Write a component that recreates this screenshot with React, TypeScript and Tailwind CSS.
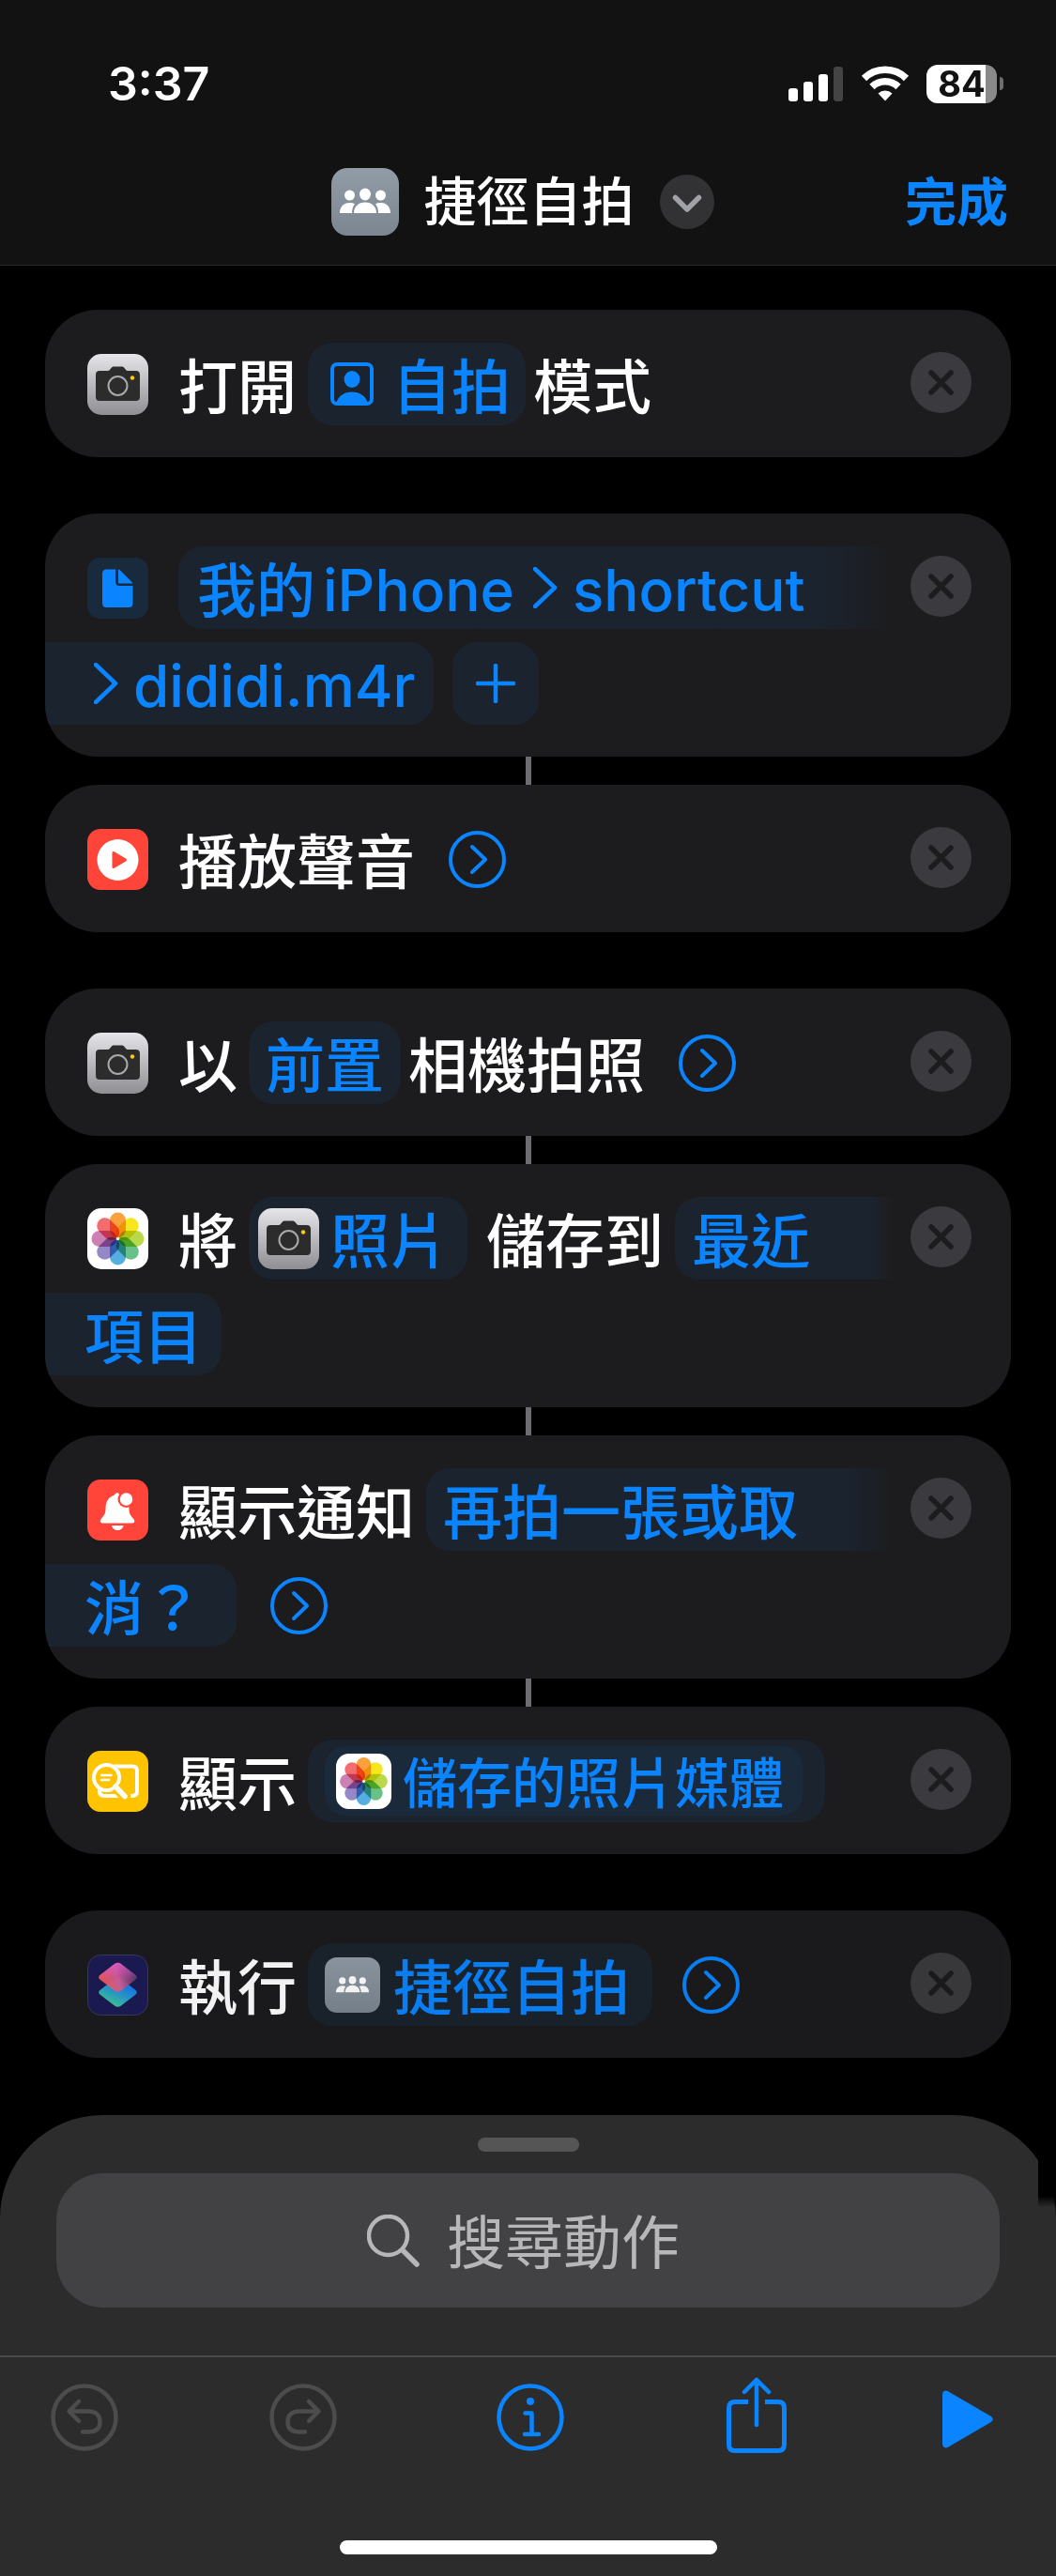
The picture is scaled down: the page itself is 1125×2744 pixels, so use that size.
import React from "react";

type IconProps = { className?: string };

function PeopleGlyph({ className }: IconProps) {
  return (
    <svg viewBox="0 0 72 72" className={className} fill="currentColor" aria-hidden="true">
      <circle cx="19.5" cy="29" r="5.5" />
      <circle cx="52.5" cy="29" r="5.5" />
      <ellipse cx="36" cy="28" rx="6" ry="6.5" />
      <path d="M24 48c0-7 5-11.500 12-11.500S48 41 48 48z" />
      <path d="M9 48c0-6.500 4-11 10.500-11 2 0 4 .4 5.500 1.300C23 40.500 22 44 22 48z" />
      <path d="M63 48c0-6.500-4-11-10.500-11-2 0-4 .4-5.500 1.300 2 2.200 3 5.700 3 9.700z" />
    </svg>
  );
}

function ShortcutTile({ className }: IconProps) {
  return (
    <span className={`flex shrink-0 bg-linear-to-b from-[#929ca7] to-[#7b8691] text-white ${className ?? ""}`}>
      <PeopleGlyph className="size-full" />
    </span>
  );
}

function CameraIcon({ className }: IconProps) {
  return (
    <svg viewBox="0 0 65 65" className={`shrink-0 ${className ?? ""}`} aria-hidden="true">
      <defs>
        <linearGradient id="camera-bg" x1="0" y1="0" x2="0" y2="1">
          <stop offset="0" stopColor="#e6e5ea" />
          <stop offset="1" stopColor="#8f8e93" />
        </linearGradient>
      </defs>
      <rect width="65" height="65" rx="15" fill="url(#camera-bg)" />
      <path
        d="M13 18h9c1.500 0 2.300-1.500 3.500-3 .8-1 1.500-1.500 3-1.500h8c1.500 0 2.200.5 3 1.500 1.200 1.500 2 3 3.500 3h9c2.500 0 4 1.500 4 4v24c0 2.500-1.500 4-4 4H13c-2.500 0-4-1.500-4-4V22c0-2.500 1.500-4 4-4z"
        fill="#2c2c2c"
      />
      <circle cx="32.500" cy="34" r="10" fill="none" stroke="#a9a8ad" strokeWidth="2" />
      <circle cx="48" cy="25.500" r="2.200" fill="#ffcc00" />
    </svg>
  );
}

const petals = ["#f9a13c", "#f7e61e", "#b9d94a", "#69c088", "#55aee2", "#9488c6", "#cd80b4", "#f36c70"];

function PhotosIcon({ className }: IconProps) {
  return (
    <svg viewBox="0 0 65 65" className={`shrink-0 ${className ?? ""}`} aria-hidden="true">
      <rect width="65" height="65" rx="15" fill="#fff" />
      <g className="isolate">
        {petals.map((color, i) => (
          <rect
            key={color}
            x="24"
            y="4.500"
            width="17"
            height="27"
            rx="8.500"
            fill={color}
            transform={`rotate(${i * 45} 32.500 32.500)`}
            className="mix-blend-multiply"
          />
        ))}
      </g>
      <circle cx="32.500" cy="32.500" r="1.500" fill="#fff" />
    </svg>
  );
}

function FileIcon({ className }: IconProps) {
  return (
    <svg viewBox="0 0 65 65" className={`shrink-0 ${className ?? ""}`} aria-hidden="true">
      <rect width="65" height="65" rx="14" fill="#1a2a3d" />
      <path
        d="M20.500 12.500H30V25.500c0 3 1.500 4.500 4.500 4.500H48.500V48.500c0 3-1.500 4.500-4.500 4.500H20.500c-3 0-4.500-1.500-4.500-4.500V17c0-3 1.500-4.500 4.500-4.500z"
        fill="#0a84ff"
      />
      <path d="M33 12.500c.8 0 1.600.5 2.500 1.400L47 25.500c.8.800 1.200 1.500 1.200 2H34.500c-1 0-1.500-.5-1.500-1.500z" fill="#0a84ff" />
    </svg>
  );
}

function PlaySoundIcon({ className }: IconProps) {
  return (
    <svg viewBox="0 0 65 65" className={`shrink-0 ${className ?? ""}`} aria-hidden="true">
      <rect width="65" height="65" rx="14" fill="#ff453a" />
      <circle cx="32.500" cy="33" r="22" fill="#fff" />
      <path d="M26.500 25.500c0-1.500 1-2 2.200-1.300L41 31.500c1.300.8 1.300 2.200 0 3L28.700 41.800c-1.200.7-2.200.2-2.200-1.300z" fill="#ff453a" />
    </svg>
  );
}

function BellIcon({ className }: IconProps) {
  return (
    <svg viewBox="0 0 65 65" className={`shrink-0 ${className ?? ""}`} aria-hidden="true">
      <rect width="65" height="65" rx="14" fill="#ff453a" />
      <path
        d="M32.500 14c-1.500 0-3 1-3.600 2.500C22.500 18.500 19.500 24 19.500 31c0 4.500-1 6.500-4 10-1.500 1.700-1.800 2.600-1.800 3.200 0 1.300 1 2.300 2.600 2.300h31.400c1.600 0 2.600-1 2.600-2.300 0-.6-.3-1.500-1.800-3.200-3-3.500-4-5.500-4-10l-.3-3z"
        fill="#fff"
      />
      <path d="M26 49h12.500c-.5 3-3 5-6.200 5s-5.800-2-6.300-5z" fill="#fff" />
      <circle cx="41.500" cy="21" r="9" fill="#ff453a" />
      <circle cx="41.500" cy="21" r="6.700" fill="#fff" />
    </svg>
  );
}

function QuickLookIcon({ className }: IconProps) {
  return (
    <svg viewBox="0 0 65 65" className={`shrink-0 ${className ?? ""}`} fill="none" aria-hidden="true">
      <rect width="65" height="65" rx="14" fill="#ffc300" />
      <path d="M28 16.500H48c3.500 0 5 1.500 5 5V43c0 3.500-1.500 5-5 5H46" stroke="#fff" strokeWidth="4" />
      <path d="M13 40v3c0 3.500 1.500 5 5 5h15" stroke="#fff" strokeWidth="4" />
      <circle cx="20.500" cy="28.500" r="15.500" fill="#ffc300" />
      <circle cx="20.500" cy="28.500" r="13.500" stroke="#fff" strokeWidth="4" />
      <path d="M30.500 39L39.500 48" stroke="#ffc300" strokeWidth="11" />
      <path d="M30 38L40 48.500" stroke="#fff" strokeWidth="5.500" strokeLinecap="round" />
      <path d="M15 26H25.500M15 31H23" stroke="#fff" strokeWidth="2.500" strokeLinecap="round" />
    </svg>
  );
}

function ShortcutsAppIcon({ className }: IconProps) {
  return (
    <svg viewBox="0 0 65 65" className={`shrink-0 ${className ?? ""}`} aria-hidden="true">
      <defs>
        <linearGradient id="layer-top" x1="0.100" y1="0.700" x2="0.950" y2="0.500">
          <stop offset="0" stopColor="#ff5f57" />
          <stop offset="0.500" stopColor="#dd5f98" />
          <stop offset="1" stopColor="#5d3a72" />
        </linearGradient>
        <linearGradient id="layer-shine" x1="0.500" y1="0" x2="0.500" y2="0.600">
          <stop offset="0" stopColor="#f060d8" />
          <stop offset="1" stopColor="#f060d8" stopOpacity="0" />
        </linearGradient>
        <linearGradient id="layer-bottom" x1="0.300" y1="1" x2="0.800" y2="0.200">
          <stop offset="0" stopColor="#45d18b" />
          <stop offset="0.500" stopColor="#2a9fd0" />
          <stop offset="1" stopColor="#1673f5" />
        </linearGradient>
      </defs>
      <rect x="0.500" y="0.500" width="64" height="64" rx="14" fill="#1c1c55" stroke="#3a3a5c" />
      <path
        d="M29 26 14 37.500c-2.400 1.700-2.400 3.800 0 5.500l15 11.500c2.500 1.800 4.500 1.800 7 0l15-11.500c2.400-1.700 2.400-3.800 0-5.500L36 26c-2.500-1.800-4.500-1.800-7 0z"
        fill="url(#layer-bottom)"
      />
      <path
        d="M29 10 14 21.500c-2.400 1.700-2.400 3.800 0 5.500l15 11.500c2.500 1.800 4.500 1.800 7 0l15-11.500c2.400-1.700 2.400-3.800 0-5.500L36 10c-2.500-1.800-4.500-1.800-7 0z"
        fill="url(#layer-top)"
        opacity="0.920"
      />
      <path
        d="M29 10 14 21.500c-2.400 1.700-2.400 3.800 0 5.500l15 11.500c2.500 1.800 4.500 1.800 7 0l15-11.500c2.400-1.700 2.400-3.800 0-5.500L36 10c-2.500-1.800-4.500-1.800-7 0z"
        fill="url(#layer-shine)"
        opacity="0.800"
      />
    </svg>
  );
}

function PortraitIcon() {
  return (
    <svg viewBox="0 0 46 46" className="size-[46px] shrink-0" fill="none" aria-hidden="true">
      <defs>
        <clipPath id="portrait-frame">
          <rect x="3" y="3" width="40" height="40" rx="3" />
        </clipPath>
      </defs>
      <rect x="2" y="2" width="42" height="42" rx="5" stroke="#0a84ff" strokeWidth="4" />
      <g fill="#0a84ff" clipPath="url(#portrait-frame)">
        <ellipse cx="23" cy="18" rx="8.500" ry="9" />
        <path d="M6 45c1-8 8-13.500 17-13.500S39 37 40 45z" />
      </g>
    </svg>
  );
}

function ChevronRight() {
  return (
    <svg viewBox="0 0 26 44" className="h-[44px] w-[26px] shrink-0" fill="none" aria-hidden="true">
      <path d="M2 2 23 22 2 42" stroke="#0a84ff" strokeWidth="4.500" strokeLinecap="round" strokeLinejoin="round" />
    </svg>
  );
}

function ExpandButton({ className }: IconProps) {
  return (
    <button type="button" aria-label="顯示更多" className={`shrink-0 ${className ?? ""}`}>
      <svg viewBox="0 0 61 61" className="size-[61px]" fill="none" stroke="#0a84ff" strokeLinecap="round" strokeLinejoin="round">
        <circle cx="30.500" cy="30.500" r="28.500" strokeWidth="4" />
        <path d="M25 17 39 30.500 25 44" strokeWidth="4" />
      </svg>
    </button>
  );
}

function RemoveButton() {
  return (
    <button type="button" aria-label="移除動作" className="absolute top-[45px] right-[42px]">
      <svg viewBox="0 0 65 65" className="size-[65px]">
        <circle cx="32.500" cy="32.500" r="32.500" fill="#3b3b3f" />
        <path d="M22 22 43 43M43 22 22 43" stroke="#1c1c1e" strokeWidth="5.500" strokeLinecap="round" />
      </svg>
    </button>
  );
}

function Card({ children, className }: { children: React.ReactNode; className?: string }) {
  return (
    <article className={`relative overflow-hidden rounded-[56px] bg-[#1c1c1e] pt-[35px] pb-[34px] ${className ?? ""}`}>
      {children}
      <RemoveButton />
    </article>
  );
}

function Line({ children, className }: { children: React.ReactNode; className?: string }) {
  return <div className={`flex h-[88px] items-center whitespace-nowrap ${className ?? ""}`}>{children}</div>;
}

function Text({ children, className }: { children: React.ReactNode; className?: string }) {
  return <span className={`pt-1.5 ${className ?? ""}`}>{children}</span>;
}

function Pill({ children, className }: { children: React.ReactNode; className?: string }) {
  return (
    <button type="button" className={`flex h-[88px] shrink-0 items-center bg-[#1b232e] text-[#0a84ff] ${className ?? ""}`}>
      {children}
    </button>
  );
}

function Connector() {
  return <div className="mx-auto h-[30px] w-[6px] bg-[#6c6c72]" />;
}

const actionIcon = "ml-[45px] mr-8 size-[65px]";
const fadingPill = "grow rounded-l-[26px] bg-transparent bg-linear-to-r from-[#1b232e] from-90% to-[#1c1c1e] mr-[126px]";

export default function App() {
  return (
    <div className="flex min-h-screen flex-col bg-black font-['Inter','Noto_Sans_CJK_TC',sans-serif] font-medium text-white">
      <header className="border-b border-[#2a2a2b] bg-[#121212]">
        <div className="flex h-[176px] items-center justify-between pt-[2px] pr-[56px] pl-[115px]">
          <span className="text-[50px] leading-none font-semibold">3:37</span>
          <div className="flex items-center gap-[18px]">
            <svg viewBox="0 0 59 37" className="h-[37px] w-[59px]" fill="#fff" aria-label="訊號">
              <rect y="23" width="10" height="14" rx="3" />
              <rect x="16" y="16" width="10" height="21" rx="3" />
              <rect x="32" y="8" width="10" height="29" rx="3" />
              <rect x="48" width="10" height="37" rx="3" fill="#444" />
            </svg>
            <svg viewBox="0 0 52 38" className="h-[38px] w-[52px]" aria-label="Wi-Fi">
              <g fill="none" stroke="#fff" strokeWidth="7.500">
                <path d="M3.500 13.500a32 32 0 0 1 45 0" />
                <path d="M12 22.500a20 20 0 0 1 28 0" />
              </g>
              <path d="M26 37.500 18.500 29.500a11 11 0 0 1 15 0z" fill="#fff" />
            </svg>
            <div className="flex items-center gap-[3px]">
              <div className="flex h-[41px] w-[75px] items-center justify-center rounded-[12px] bg-linear-to-r from-white from-84% to-[#8a8a8a] to-84%">
                <span className="text-[38px] leading-none font-bold text-[#121212]">84</span>
              </div>
              <div className="h-[14px] w-[4px] rounded-r-full bg-[#6e6e6e]" />
            </div>
          </div>
        </div>
        <div className="grid h-[106px] grid-cols-[1fr_auto_1fr] items-center pb-[28px]">
          <span />
          <div className="flex items-center pr-3">
            <ShortcutTile className="size-[72px] rounded-[17px]" />
            <h1 className="ml-[27px] text-[56px] leading-[76px] font-medium">捷徑自拍</h1>
            <button type="button" aria-label="選單" className="ml-[27px]">
              <svg viewBox="0 0 58 58" className="size-[58px]" fill="none">
                <circle cx="29" cy="29" r="29" fill="#323234" />
                <path d="M16.500 24.500 29 37 41.500 24.500" stroke="#a1a1a8" strokeWidth="5.500" strokeLinecap="round" strokeLinejoin="round" />
              </svg>
            </button>
          </div>
          <button type="button" className="justify-self-end pr-[51px] text-[55px] leading-[76px] font-semibold text-[#0a84ff]">
            完成
          </button>
        </div>
      </header>

      <main className="grow px-12 pt-[47px] text-[63px] leading-[80px]">
        <Card>
          <Line>
            <CameraIcon className={actionIcon} />
            <Text>打開</Text>
            <Pill className="mr-2 ml-3 rounded-[26px] pr-4 pl-6">
              <PortraitIcon />
              <Text className="ml-5">自拍</Text>
            </Pill>
            <Text>模式</Text>
          </Line>
        </Card>

        <Card className="mt-[60px]">
          <Line>
            <FileIcon className={actionIcon} />
            <Pill className={`${fadingPill} pl-5`}>
              <Text>我的</Text>
              <Text className="ml-2 text-[62px]">iPhone</Text>
              <span className="mr-4 ml-5">
                <ChevronRight />
              </span>
              <Text className="text-[62px]">shortcut</Text>
            </Pill>
          </Line>
          <Line className="mt-[14px]">
            <Pill className="rounded-r-[26px] pr-5 pl-[52px]">
              <ChevronRight />
              <Text className="ml-4 text-[62px]">dididi.m4r</Text>
            </Pill>
            <Pill className="ml-5 w-[92px] justify-center rounded-[26px]">
              <svg viewBox="0 0 42 42" className="size-[42px]" aria-label="加入">
                <path d="M21 2V40M2 21H40" stroke="#0a84ff" strokeWidth="4.500" strokeLinecap="round" />
              </svg>
            </Pill>
          </Line>
        </Card>
        <Connector />
        <Card>
          <Line>
            <PlaySoundIcon className={actionIcon} />
            <Text>播放聲音</Text>
            <ExpandButton className="ml-9" />
          </Line>
        </Card>

        <Card className="mt-[60px]">
          <Line>
            <CameraIcon className={actionIcon} />
            <Text>以</Text>
            <Pill className="mr-2 ml-3 rounded-[26px] px-[18px]">
              <Text>前置</Text>
            </Pill>
            <Text>相機拍照</Text>
            <ExpandButton className="ml-9" />
          </Line>
        </Card>
        <Connector />
        <Card>
          <Line>
            <PhotosIcon className={actionIcon} />
            <Text>將</Text>
            <Pill className="mr-5 ml-3 rounded-[26px] pr-5 pl-2.5">
              <CameraIcon className="size-[65px]" />
              <Text className="ml-3">照片</Text>
            </Pill>
            <Text>儲存到</Text>
            <Pill className={`${fadingPill} ml-3 pl-[18px]`}>
              <Text>最近</Text>
            </Pill>
          </Line>
          <Line className="mt-[14px]">
            <Pill className="rounded-r-[26px] pr-5 pl-[42px]">
              <Text>項目</Text>
            </Pill>
          </Line>
        </Card>
        <Connector />
        <Card>
          <Line>
            <BellIcon className={actionIcon} />
            <Text>顯示通知</Text>
            <Pill className={`${fadingPill} ml-3 pl-[18px]`}>
              <Text>再拍一張或取</Text>
            </Pill>
          </Line>
          <Line className="mt-[14px]">
            <Pill className="rounded-r-[26px] pr-9 pl-[42px]">
              <Text>消？</Text>
            </Pill>
            <ExpandButton className="ml-9" />
          </Line>
        </Card>
        <Connector />
        <Card>
          <Line>
            <QuickLookIcon className={actionIcon} />
            <Text>顯示</Text>
            <Pill className="ml-3 rounded-[26px] pr-6 pl-[18px]">
              <span className="flex h-[74px] items-center rounded-[22px] bg-[#1a2a3a] pr-5 pl-3">
                <PhotosIcon className="size-[59px]" />
                <Text className="ml-3 text-[58px]">儲存的照片媒體</Text>
              </span>
            </Pill>
          </Line>
        </Card>

        <Card className="mt-[60px] opacity-95">
          <Line>
            <ShortcutsAppIcon className={actionIcon} />
            <Text>執行</Text>
            <Pill className="ml-3 rounded-[26px] pr-6 pl-[18px]">
              <ShortcutTile className="size-[59px] rounded-[13px] p-1.5" />
              <Text className="ml-3.5">捷徑自拍</Text>
            </Pill>
            <ExpandButton className="ml-8" />
          </Line>
        </Card>
      </main>

      <footer className="relative mt-[61px] rounded-t-[110px] bg-[#2c2c2c]">
        <div className="absolute top-0 right-0 h-[98px] w-[19px] bg-linear-to-b from-black from-88% to-transparent" />
        <div className="px-[60px] pt-6 pb-[51px]">
          <div className="mx-auto h-[15px] w-[108px] rounded-full bg-[#555]" />
          <label className="mt-[23px] flex h-[143px] items-center justify-center rounded-[50px] bg-[#424244]">
            <svg viewBox="0 0 56 56" className="size-[56px]" fill="none" stroke="#b7b7ba" strokeLinecap="round" aria-hidden="true">
              <circle cx="22.500" cy="22.500" r="20.500" strokeWidth="4.500" />
              <path d="M38 38 53 53" strokeWidth="5.500" />
            </svg>
            <input
              type="text"
              aria-label="搜尋動作"
              placeholder="搜尋動作"
              className="ml-[29px] h-[94px] w-[258px] bg-transparent pt-1.5 text-[62px] leading-[88px] font-normal text-white outline-none placeholder:text-[#b7b7ba]"
            />
          </label>
        </div>
        <nav className="border-t-2 border-[#4a4a4b] pt-5 pb-6">
          <div className="flex justify-between pr-[34px] pl-[38px]">
            <button type="button" aria-label="還原" disabled className="flex size-[88px] items-center justify-center pl-4 text-[#4c4c4d]">
              <svg viewBox="0 0 72 72" className="size-[72px]" fill="none" stroke="currentColor" strokeWidth="4.500" strokeLinecap="round" strokeLinejoin="round">
                <circle cx="36" cy="36" r="33.500" />
                <path d="M30 19 19.500 29.500 30 40M20.500 29.500H40c8 0 12.500 4 12.500 11.500S48 51.500 40 51.500H34" />
              </svg>
            </button>
            <button type="button" aria-label="重做" disabled className="flex size-[88px] items-center justify-center text-[#4c4c4d]">
              <svg viewBox="0 0 72 72" className="size-[72px]" fill="none" stroke="currentColor" strokeWidth="4.500" strokeLinecap="round" strokeLinejoin="round">
                <circle cx="36" cy="36" r="33.500" />
                <path d="M42 19 52.500 29.500 42 40M51.500 29.500H32c-8 0-12.500 4-12.500 11.500S24 51.500 32 51.500h6" />
              </svg>
            </button>
            <button type="button" aria-label="資訊" className="flex size-[88px] items-center justify-center text-[#0a84ff]">
              <svg viewBox="0 0 72 72" className="size-[72px]" fill="none" stroke="currentColor" strokeWidth="4.500" strokeLinecap="round" strokeLinejoin="round">
                <circle cx="36" cy="36" r="33.500" />
                <circle cx="36" cy="19" r="4" fill="currentColor" stroke="none" />
                <path d="M30.500 31.500H37.500V54M30 54H45" />
              </svg>
            </button>
            <button type="button" aria-label="分享" className="flex size-[88px] items-center justify-center pb-1 text-[#0a84ff]">
              <svg viewBox="0 0 64 82" className="h-[82px] w-[64px]" fill="none" stroke="currentColor" strokeWidth="5" strokeLinecap="round" strokeLinejoin="round">
                <path d="M23 26.500H9c-4.500 0-6.500 2-6.500 6.500V72c0 4.500 2 6.500 6.500 6.500H55c4.500 0 6.500-2 6.500-6.500V33c0-4.500-2-6.500-6.500-6.500H41" strokeLinecap="butt" />
                <path d="M32 3V51M19 16 32 3 45 16" strokeWidth="4.500" />
              </svg>
            </button>
            <button type="button" aria-label="執行" className="flex size-[88px] items-center justify-center pt-1 pr-8 text-[#0a84ff]">
              <svg viewBox="0 0 54 62" className="h-[62px] w-[54px] shrink-0" fill="currentColor">
                <path d="M0 5c0-4 3-5.500 6.500-3.500L51 27.500c3.500 2 3.500 5 0 7L6.500 60.500C3 62.500 0 61 0 57z" />
              </svg>
            </button>
          </div>
          <div className="mx-auto mt-[87px] h-[15px] w-[402px] rounded-full bg-white" />
        </nav>
      </footer>
    </div>
  );
}
